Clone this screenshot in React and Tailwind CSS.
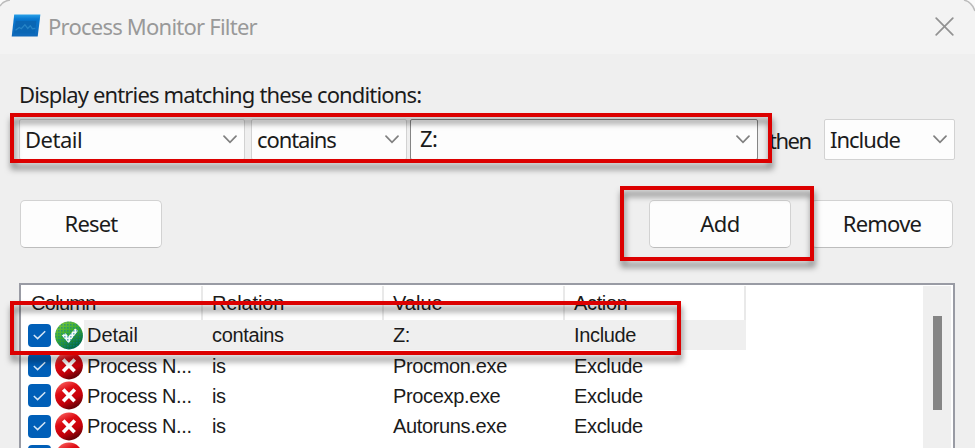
import React from "react";

const uiFont = "font-['Noto_Sans','Open_Sans',sans-serif]";
const listFont = "font-['Liberation_Sans',Arial,sans-serif]";

function Chevron() {
  return (
    <svg className="shrink-0" width="14" height="9" viewBox="0 0 14 9" fill="none" stroke="#808080" strokeWidth="1.7" strokeLinecap="round">
      <path d="M1 1.2 7 7.4l6-6.2" />
    </svg>
  );
}

function Combo({ className, textClass, children }) {
  return (
    <div className={`flex h-[41px] shrink-0 items-center justify-between rounded-[2px] border bg-[#fdfdfd] ${className}`}>
      <span className={textClass}>{children}</span>
      <Chevron />
    </div>
  );
}

function Button({ className = "", textClass, children }) {
  return (
    <button className={`flex h-12 w-[142px] shrink-0 items-center justify-center rounded-[5px] border border-[#d2d2d2] border-b-[#bdbdbd] bg-[#fdfdfd] pb-[2px] ${className}`}>
      <span className={textClass}>{children}</span>
    </button>
  );
}

function ProcmonIcon() {
  return (
    <svg width="30" height="24" viewBox="0 0 30 24">
      <defs>
        <linearGradient id="app" x1="0" y1="0" x2="0" y2="1">
          <stop offset="0" stopColor="#28a0e8" />
          <stop offset=".2" stopColor="#0878d0" />
          <stop offset="1" stopColor="#1068b8" />
        </linearGradient>
      </defs>
      <path d="M3.2 .6H29.4l-2.7 22H.7Z" fill="url(#app)" />
      <path d="M4.7 6.8h20.8l-1.7 12.6H3.1Z" fill="#0a66b4" />
      <path d="M4.5 16.2 8.3 13.5l2 1.2 3.6-4 2.8 3.8 2.6-2.8 2 3 3-.4" fill="none" stroke="#2684c6" strokeWidth="1.3" />
    </svg>
  );
}

function Check() {
  return (
    <span className="flex h-[23px] w-[23px] shrink-0 items-center justify-center rounded-[4px] bg-[#005fb8]">
      <svg width="13" height="10" viewBox="0 0 13 10" fill="none" stroke="#d4e6f6" strokeWidth="1.5">
        <path d="m.8 5 3.8 3.6L12.2 1.2" />
      </svg>
    </span>
  );
}

function StatusIcon({ include }) {
  return (
    <svg className="ml-1 shrink-0" width="28" height="29" viewBox="0 0 28 29">
      <defs>
        <linearGradient id="red" x1="0" y1="0" x2="0.5" y2="1">
          <stop offset="0" stopColor="#ff7a75" />
          <stop offset=".4" stopColor="#df0c14" />
          <stop offset=".75" stopColor="#c5000a" />
          <stop offset="1" stopColor="#6c0006" />
        </linearGradient>
        <linearGradient id="green" x1="0" y1="0" x2=".6" y2="1">
          <stop offset="0" stopColor="#8ccc3c" />
          <stop offset=".5" stopColor="#3cae30" />
          <stop offset="1" stopColor="#006844" />
        </linearGradient>
        <pattern id="dots" width="3" height="3" patternUnits="userSpaceOnUse">
          <rect width="1.6" height="1.6" fill="#087c98" />
        </pattern>
      </defs>
      <circle cx="14" cy="14.5" r="13.9" fill={include ? "url(#green)" : "url(#red)"} />
      {include ? (
        <>
          <path d="m6.8 14.6 3.6-2.6 2.9 3.6 6.8-8.2 2.9 2.4-9.4 12.4Z" fill="#f2fbfa" />
          <circle cx="14" cy="14.5" r="13.9" fill="url(#dots)" opacity=".55" />
        </>
      ) : (
        <path d="m8.2 8.5 11.4 11.8M19.8 8.5 8.2 20.3" stroke="#fff" strokeWidth="3.7" />
      )}
    </svg>
  );
}

const rows = [
  { col: "Detail", rel: "contains", value: "Z:", action: "Include", include: true },
  { col: "Process N...", rel: "is", value: "Procmon.exe", action: "Exclude" },
  { col: "Process N...", rel: "is", value: "Procexp.exe", action: "Exclude" },
  { col: "Process N...", rel: "is", value: "Autoruns.exe", action: "Exclude" },
  { action: "" },
];

function HeaderCell({ children, className = "" }) {
  return <div className={`w-[181px] border-r-2 border-[#e9e9e9] pl-[9px] pt-[5px] ${className}`}>{children}</div>;
}

export default function App() {
  return (
    <div className={`relative h-[448px] w-[975px] overflow-hidden bg-[#efefef] text-[22px] text-[#1b1b1b] ${uiFont}`}>
      <div className="flex h-full flex-col whitespace-nowrap">
        <header className="flex h-[54px] shrink-0 items-center bg-[#f3f3f3] pb-[2px] pl-[11px] pr-[21px]">
          <ProcmonIcon />
          <h1 className="ml-[7px] text-[22px] tracking-[-0.77px] text-[#999]">Process Monitor Filter</h1>
          <svg className="ml-auto" width="19" height="19" viewBox="0 0 19 19" stroke="#929292" strokeWidth="1.7" strokeLinecap="round">
            <path d="m1.2 1.2 16.6 16.6M17.8 1.2 1.2 17.8" />
          </svg>
        </header>
        <p className="mt-[24px] h-[34px] shrink-0 pl-[19px] leading-[33px] tracking-[-0.85px]">Display entries matching these conditions:</p>

        <div className="mt-[7px] flex shrink-0 items-center pl-[19px]">
          <Combo className="w-[226px] border-[#d2d2d2] pl-[5px] pr-[7px]" textClass="tracking-[-0.5px]">Detail</Combo>
          <Combo className="ml-[6px] w-[156px] border-[#d2d2d2] pl-[5px] pr-[7px]" textClass="tracking-[-1.1px]">contains</Combo>
          <Combo className="ml-[3px] w-[348px] border-[#858585] pl-[9px] pr-[7px]" textClass="pb-[2px] tracking-[-0.5px]">Z:</Combo>
          <span className="ml-[11px] w-[55px] pt-[2px] tracking-[-1.5px]">then</span>
          <Combo className="w-[131px] border-[#d2d2d2] pl-[5px] pr-[7px]" textClass="tracking-[-1px]">Include</Combo>
        </div>

        <div className="mt-[40px] flex shrink-0 pl-[20px]">
          <Button textClass="tracking-[-0.8px]">Reset</Button>
          <Button className="ml-[487px]" textClass="tracking-[-0.5px]">Add</Button>
          <Button className="ml-[20px]" textClass="tracking-[-0.8px]">Remove</Button>
        </div>

        <section className={`ml-[19px] mt-[35px] flex h-[180px] w-[936px] shrink-0 border-2 border-[#999ba4] bg-white pl-px pr-[2px] pt-px text-[20px] tracking-[-0.35px] ${listFont}`}>
          <div className="w-[724px]">
            <div className="flex h-[34px] leading-[25px]">
              <HeaderCell className="tracking-[-0.7px]">Column</HeaderCell>
              <HeaderCell className="tracking-[-0.15px]">Relation</HeaderCell>
              <HeaderCell className="tracking-[0px]">Value</HeaderCell>
              <HeaderCell>Action</HeaderCell>
            </div>
            {rows.map((row, i) => (
              <div key={i} className="flex h-[30.4px] items-center">
                <div className="flex h-full w-[62px] shrink-0 items-center pl-[6px]">
                  <Check />
                  <StatusIcon include={row.include} />
                </div>
                <div className={`flex h-full flex-1 items-center ${row.include ? "bg-[#efefef]" : ""}`}>
                  <span className={`w-[128px] pl-[3px] ${row.include ? "tracking-[-0.05px]" : ""}`}>{row.col}</span>
                  <span className="w-[181px]">{row.rel}</span>
                  <span className="w-[181px]">{row.value}</span>
                  <span>{row.action}</span>
                </div>
              </div>
            ))}
          </div>
          <div className="ml-auto w-[28px] bg-[#efefef] pt-[30px]">
            <div className="ml-[10px] h-[94px] w-[9px] bg-[#858585]" />
          </div>
        </section>
      </div>

      <svg className="pointer-events-none absolute left-0 top-0" width="975" height="16" viewBox="0 0 975 16" fill="none">
        <path d="M0 0h10Q3 1 0 7ZM975 0h-10q7 2 10 10Z" fill="#fafafa" />
        <path d="M0 6Q3 1 10 0M964 0q8 2 11 11" stroke="#bcbcbc" strokeWidth="1.5" />
      </svg>
      <div className="pointer-events-none absolute left-[10px] top-[113px] h-[50px] w-[762px] border-4 border-[#dc0000] drop-shadow-[1px_6px_3px_rgba(0,0,0,0.5)]" />
      <div className="pointer-events-none absolute left-[620px] top-[186px] h-[75px] w-[194px] border-4 border-[#dc0000] drop-shadow-[1px_6px_3px_rgba(0,0,0,0.5)]" />
      <div className="pointer-events-none absolute left-[10px] top-[301px] h-[54px] w-[671px] border-4 border-[#dc0000] drop-shadow-[1px_6px_3px_rgba(0,0,0,0.5)]" />
    </div>
  );
}
